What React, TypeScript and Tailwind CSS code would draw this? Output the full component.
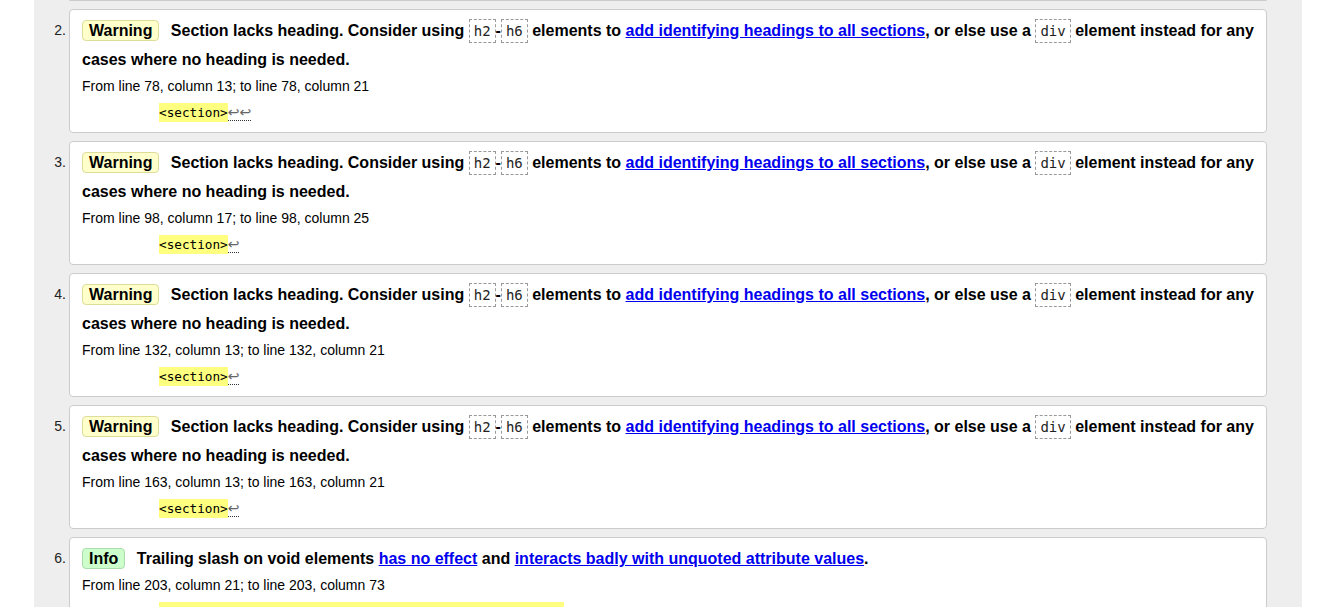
import React from 'react';

interface Msg {
  n: number;
  kind: 'Warning' | 'Info';
  from: string;
  extract: string;
  tail: number;
}

const messages: Msg[] = [
  { n: 2, kind: 'Warning', from: 'From line 78, column 13; to line 78, column 21', extract: '<section>', tail: 2 },
  { n: 3, kind: 'Warning', from: 'From line 98, column 17; to line 98, column 25', extract: '<section>', tail: 1 },
  { n: 4, kind: 'Warning', from: 'From line 132, column 13; to line 132, column 21', extract: '<section>', tail: 1 },
  { n: 5, kind: 'Warning', from: 'From line 163, column 13; to line 163, column 21', extract: '<section>', tail: 1 },
];

const mono = "font-['DejaVu_Sans_Mono','Liberation_Mono',monospace]";

const Code = ({ children }: { children: React.ReactNode }) => (
  <code className={`${mono} font-normal text-[14px] leading-none px-[4px] py-[3px] border border-dashed border-[#999] text-[#222]`}>
    {children}
  </code>
);

const Link = ({ children }: { children: React.ReactNode }) => (
  <a href="#" className="text-[#0000ee] underline">{children}</a>
);

const Badge = ({ kind }: { kind: 'Warning' | 'Info' }) => (
  <span
    className={`inline-block px-[6px] leading-[19px] rounded-[4px] border mr-[7px] ${
      kind === 'Warning' ? 'bg-[#ffffcc] border-[#dddd99]' : 'bg-[#ccffcc] border-[#aaddaa]'
    }`}
  >
    {kind}
  </span>
);

const Extract = ({ text, tail }: { text: string; tail: number }) => (
  <p className={`${mono} text-[12.7px] leading-[27px] pl-[77px]`}>
    <span className="bg-[#ffff80] py-[2px]">{text}</span>
    {tail > 0 && (
      <span className="font-['DejaVu_Sans',sans-serif] text-[14px] leading-none text-[#666] border-b border-dotted border-[#333]">
        {'\u21a9'.repeat(tail)}
      </span>
    )}
  </p>
);

const Row = ({ n, children }: { n: number; children: React.ReactNode }) => (
  <li className="flex">
    <span className="w-[35px] shrink-0 text-right pr-[3px] text-[14px] leading-[29px] pt-[7px] text-[#222]">{n}.</span>
    <div className="flex-1 bg-white border border-[#cccccc] rounded-[4px] pl-[12px] pr-[12px] pt-[6px] pb-[6px]">
      {children}
    </div>
  </li>
);

export default function App() {
  return (
    <div className="min-h-screen bg-white font-['Liberation_Sans',Arial,sans-serif] text-black">
      <div className="ml-[34px] w-[1268px] bg-[#eeeeee] h-[607px] overflow-hidden pr-[35px]">
        <div className="ml-[35px] h-px bg-[#cccccc] rounded-b-[4px]" />
        <ol className="flex flex-col gap-[8px] pt-[8px]">
          {messages.map(m => (
            <Row key={m.n} n={m.n}>
              <p className="text-[16px] font-bold leading-[29px]">
                <Badge kind={m.kind} /> Section lacks heading. Consider using <Code>h2</Code>-<Code>h6</Code> elements to{' '}
                <Link>add identifying headings to all sections</Link>, or else use a <Code>div</Code> element instead for
                any cases where no heading is needed.
              </p>
              <p className="text-[14px] leading-[25px]">{m.from}</p>
              <Extract text={m.extract} tail={m.tail} />
            </Row>
          ))}
          <Row n={6}>
            <p className="text-[16px] font-bold leading-[29px]">
              <Badge kind="Info" /> Trailing slash on void elements <Link>has no effect</Link> and{' '}
              <Link>interacts badly with unquoted attribute values</Link>.
            </p>
            <p className="text-[14px] leading-[25px]">From line 203, column 21; to line 203, column 73</p>
            <Extract text={'<img src="images/logo.png" alt="Logo" class="logo" />'} tail={0} />
          </Row>
        </ol>
      </div>
    </div>
  );
}
